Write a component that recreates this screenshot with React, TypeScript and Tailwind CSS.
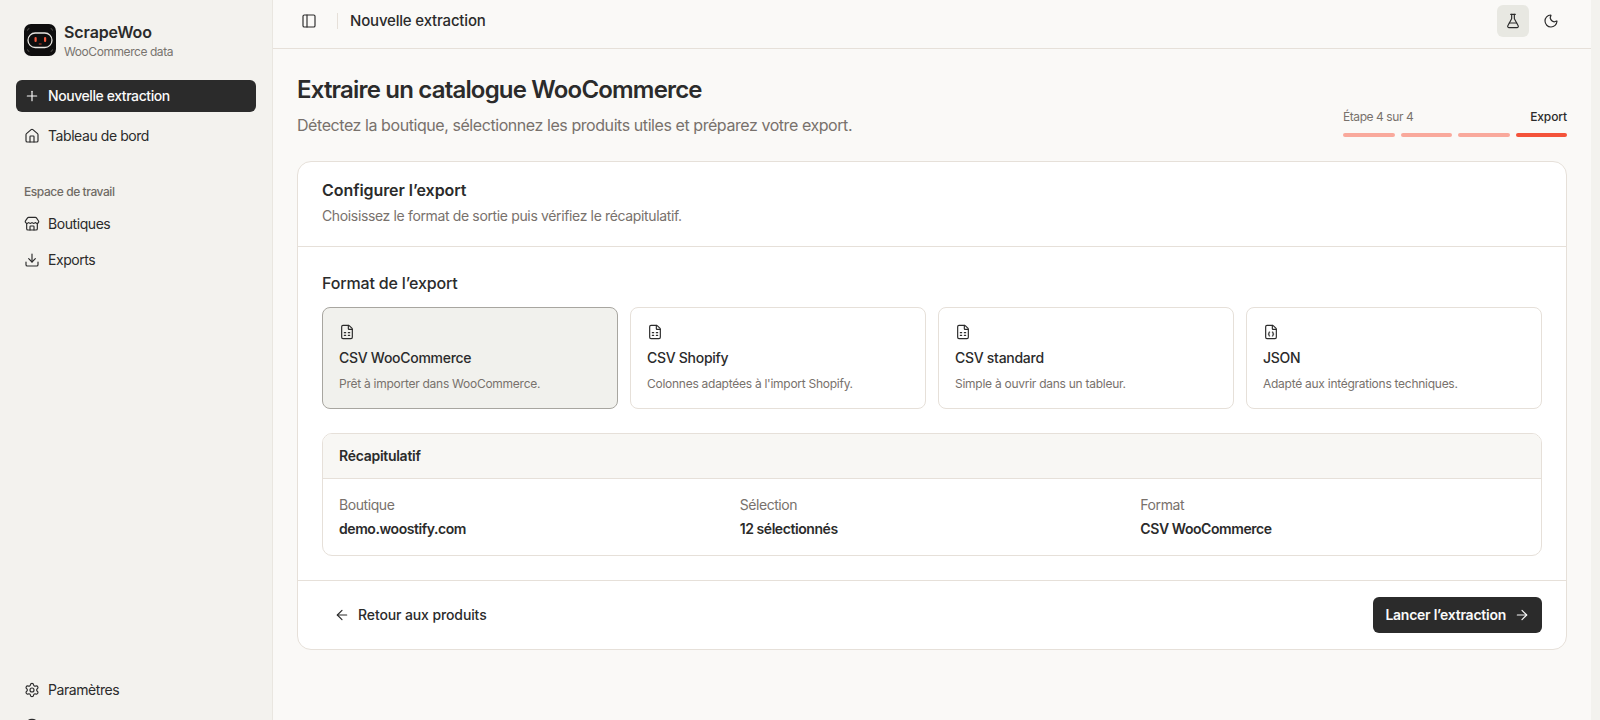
import { ArrowLeft, ArrowRight, Download, FileJson, FileSpreadsheet, FlaskConical, House, LifeBuoy, Moon, PanelLeft, Plus, Settings, Store } from 'lucide-react';

const formats = [
  { title: 'CSV WooCommerce', text: 'Prêt à importer dans WooCommerce.', icon: FileSpreadsheet, active: true },
  { title: 'CSV Shopify', text: "Colonnes adaptées à l'import Shopify.", icon: FileSpreadsheet, active: false },
  { title: 'CSV standard', text: 'Simple à ouvrir dans un tableur.', icon: FileSpreadsheet, active: false },
  { title: 'JSON', text: 'Adapté aux intégrations techniques.', icon: FileJson, active: false },
];

const summary = [
  { label: 'Boutique', value: 'demo.woostify.com' },
  { label: 'Sélection', value: '12 sélectionnés' },
  { label: 'Format', value: 'CSV WooCommerce' },
];

function Logo() {
  return (
    <svg className="w-8 h-8 shrink-0" viewBox="0 0 32 32">
      <rect width="32" height="32" rx="7" fill="#0e0e0e" />
      <rect x="4" y="9" width="24" height="14.5" rx="7.2" fill="none" stroke="#e8e6e1" strokeWidth="1.3" />
      <rect x="10.5" y="13" width="2.2" height="5" rx="1.1" fill="#f4583c" />
      <rect x="20" y="13" width="2.2" height="5" rx="1.1" fill="#f4583c" />
      <path d="M14.8 20h2.8" stroke="#f4583c" strokeWidth="0.8" />
      <path d="M3.5 6.5c0-1 .8-1.8 1.8-1.8M28.5 6.5c0-1-.8-1.8-1.8-1.8M3.5 25.5c0 1 .8 1.8 1.8 1.8M28.5 25.5c0 1-.8 1.8-1.8 1.8" fill="none" stroke="#77756f" strokeWidth="0.8" />
    </svg>
  );
}

function NavItem({ icon: Icon, label }: { icon: typeof House; label?: string }) {
  return (
    <div className="flex items-center gap-2 h-8 px-2 text-sm text-[#2b2b2b]">
      <Icon className="w-4 h-4" strokeWidth={1.75} />
      {label && <span>{label}</span>}
    </div>
  );
}

export default function App() {
  return (
    <div className="flex h-[720px] overflow-hidden bg-[#f3f2ee] font-['Inter',sans-serif] tracking-[-0.027em] text-[#2b2b2b]">
      <aside className="w-[273px] shrink-0 h-[742px] flex flex-col px-4 pt-4 border-r border-[#e9e6e0]">
        <div className="flex items-center gap-2 h-12 px-2">
          <Logo />
          <div className="flex flex-col pt-[2px]">
            <span className="text-base leading-5 font-semibold tracking-[-0.006em]">ScrapeWoo</span>
            <span className="mt-[2px] text-xs leading-4 text-[#78746e]">WooCommerce data</span>
          </div>
        </div>
        <div className="mt-4 flex items-center gap-2 h-8 px-2 rounded-md bg-[#2b2b2b] text-[#fafafa] text-sm font-medium tracking-[-0.03em]">
          <Plus className="w-4 h-4" strokeWidth={1.75} />
          <span>Nouvelle extraction</span>
        </div>
        <div className="mt-2">
          <NavItem icon={House} label="Tableau de bord" />
        </div>
        <div className="mt-6 h-8 px-2 flex items-center text-xs font-medium text-[#6f6b65]">Espace de travail</div>
        <div className="flex flex-col gap-1">
          <NavItem icon={Store} label="Boutiques" />
          <NavItem icon={Download} label="Exports" />
        </div>
        <div className="mt-auto flex flex-col gap-1">
          <NavItem icon={Settings} label="Paramètres" />
          <NavItem icon={LifeBuoy} />
        </div>
      </aside>

      <main className="w-[1318px] shrink-0 bg-[#faf9f7]">
        <header className="h-[49px] flex items-center justify-between border-b border-[#e6e0d9] pl-5 pr-6 pb-[6px]">
          <div className="flex items-center">
            <div className="w-8 h-8 flex items-center justify-center">
              <PanelLeft className="w-4 h-4" strokeWidth={1.75} />
            </div>
            <div className="w-px h-4 bg-[#e6e0d9] mx-3" />
            <span className="pt-px text-[15px] font-medium tracking-[-0.012em]">Nouvelle extraction</span>
          </div>
          <div className="flex items-center gap-[6px]">
            <div className="w-8 h-8 rounded-md bg-[#e8e8e2] flex items-center justify-center">
              <FlaskConical className="w-4 h-4" strokeWidth={1.75} />
            </div>
            <div className="w-8 h-8 flex items-center justify-center">
              <Moon className="w-4 h-4" strokeWidth={1.75} />
            </div>
          </div>
        </header>

        <div className="px-6 pt-6">
          <div className="flex items-end justify-between h-16">
            <div>
              <h1 className="text-2xl leading-8 font-semibold tracking-[-0.034em]">Extraire un catalogue WooCommerce</h1>
              <p className="mt-[7px] text-base leading-6 text-[#78716c]">
                Détectez la boutique, sélectionnez les produits utiles et préparez votre export.
              </p>
            </div>
            <div className="w-[224px]">
              <div className="flex justify-between text-xs leading-4">
                <span className="text-[#78716c]">Étape 4 sur 4</span>
                <span className="font-medium tracking-[-0.01em]">Export</span>
              </div>
              <div className="mt-2 flex gap-[6px]">
                <div className="flex-1 h-1 rounded-full bg-[#f9a99c]" />
                <div className="flex-1 h-1 rounded-full bg-[#f9a99c]" />
                <div className="flex-1 h-1 rounded-full bg-[#f9a99c]" />
                <div className="flex-1 h-1 rounded-full bg-[#f4533a]" />
              </div>
            </div>
          </div>

          <section className="mt-6 bg-white border border-[#e6e0d9] rounded-[14px]">
            <div className="px-6 pt-4 pb-5 border-b border-[#e6e0d9]">
              <h2 className="text-base leading-6 font-semibold tracking-[-0.004em]">Configurer l’export</h2>
              <p className="mt-1 text-sm leading-5 text-[#78716c] tracking-[-0.0255em]">Choisissez le format de sortie puis vérifiez le récapitulatif.</p>
            </div>

            <div className="px-6 py-6">
              <h3 className="text-base leading-6 font-medium tracking-[-0.01em]">Format de l’export</h3>
              <div className="mt-3 grid grid-cols-4 gap-3">
                {formats.map(f => (
                  <div
                    key={f.title}
                    className={`h-[102px] rounded-lg border p-4 ${
                      f.active ? 'border-[#a8a6a0] bg-[#f1f1ed]' : 'border-[#e6e0d9] bg-white'
                    }`}
                  >
                    <f.icon className="w-4 h-4" strokeWidth={1.75} />
                    <div className="mt-2 text-sm leading-5 font-medium tracking-[-0.02em]">{f.title}</div>
                    <div className="mt-2 text-xs leading-4 text-[#78716c] tracking-[-0.022em]">{f.text}</div>
                  </div>
                ))}
              </div>

              <div className="mt-6 border border-[#e6e0d9] rounded-[10px] overflow-hidden">
                <div className="h-[45px] px-4 flex items-center bg-[#f8f7f4] border-b border-[#e6e0d9] text-sm font-semibold tracking-[-0.02em]">Récapitulatif</div>
                <div className="grid grid-cols-3 gap-4 px-4 py-4">
                  {summary.map(s => (
                    <div key={s.label}>
                      <div className="text-sm leading-5 text-[#78716c]">{s.label}</div>
                      <div className="mt-1 text-sm leading-5 font-semibold">{s.value}</div>
                    </div>
                  ))}
                </div>
              </div>
            </div>

            <div className="px-6 py-4 border-t border-[#e6e0d9] flex items-center justify-between">
              <div className="h-9 px-3 flex items-center gap-2 text-sm font-medium tracking-[-0.008em]">
                <ArrowLeft className="w-4 h-4" strokeWidth={1.75} />
                <span>Retour aux produits</span>
              </div>
              <div className="h-9 px-3 rounded-md bg-[#2b2b2b] text-[#fafafa] flex items-center gap-2 text-sm font-semibold tracking-[-0.018em]">
                <span>Lancer l’extraction</span>
                <ArrowRight className="w-4 h-4" strokeWidth={1.75} />
              </div>
            </div>
          </section>
        </div>
      </main>
    </div>
  );
}
